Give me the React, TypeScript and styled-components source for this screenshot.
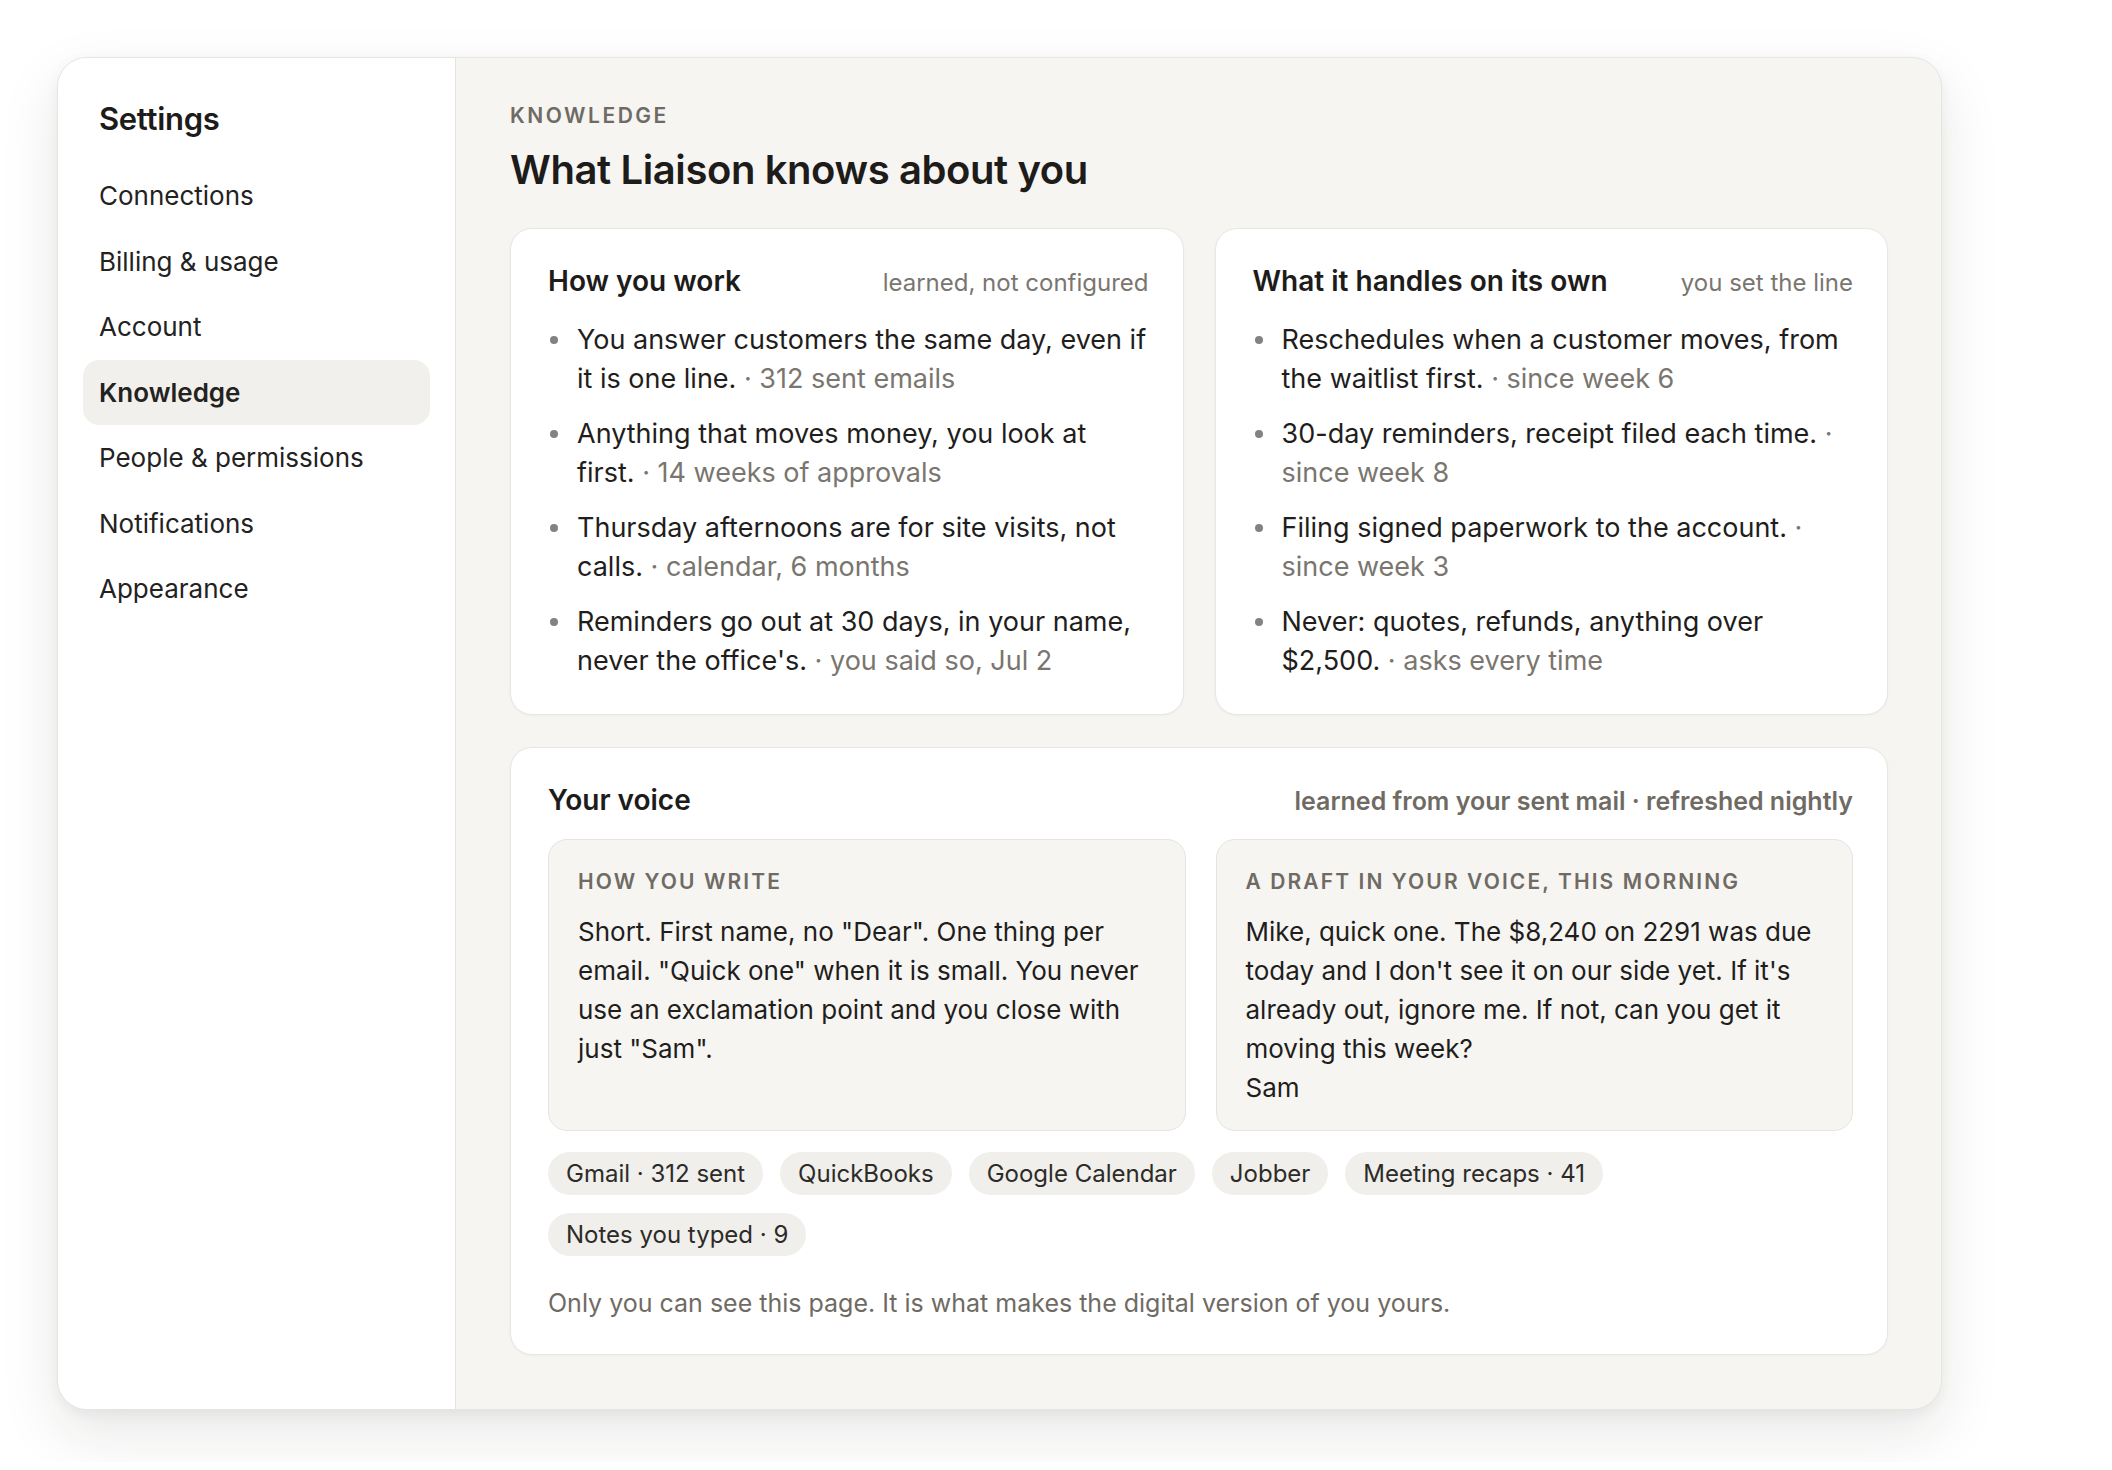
import { createGlobalStyle, styled } from "styled-components";

const GlobalStyle = createGlobalStyle`
  * { box-sizing: border-box; }
  body {
    margin: 0;
    background: #ffffff;
    font-family: Inter, "Noto Sans", sans-serif;
    color: #1f1e1c;
    -webkit-font-smoothing: antialiased;
  }
`;

const navItems = [
  "Connections",
  "Billing & usage",
  "Account",
  "Knowledge",
  "People & permissions",
  "Notifications",
  "Appearance",
];

type Fact = { text: string; source: string };

const howYouWork: Fact[] = [
  { text: "You answer customers the same day, even if it is one line.", source: "312 sent emails" },
  { text: "Anything that moves money, you look at first.", source: "14 weeks of approvals" },
  { text: "Thursday afternoons are for site visits, not calls.", source: "calendar, 6 months" },
  { text: "Reminders go out at 30 days, in your name, never the office's.", source: "you said so, Jul 2" },
];

const onItsOwn: Fact[] = [
  { text: "Reschedules when a customer moves, from the waitlist first.", source: "since week 6" },
  { text: "30-day reminders, receipt filed each time.", source: "since week 8" },
  { text: "Filing signed paperwork to the account.", source: "since week 3" },
  { text: "Never: quotes, refunds, anything over $2,500.", source: "asks every time" },
];

const sources = [
  "Gmail · 312 sent",
  "QuickBooks",
  "Google Calendar",
  "Jobber",
  "Meeting recaps · 41",
  "Notes you typed · 9",
];

const FactCard = ({ title, meta, facts }: { title: string; meta: string; facts: Fact[] }) => (
  <Card>
    <CardHeader>
      <CardTitle>{title}</CardTitle>
      <CardMeta>{meta}</CardMeta>
    </CardHeader>
    <FactList>
      {facts.map((fact) => (
        <FactItem key={fact.text}>
          {fact.text} <Source>· {fact.source}</Source>
        </FactItem>
      ))}
    </FactList>
  </Card>
);

const App = () => {
  return (
    <>
      <GlobalStyle />
      <Page>
        <Frame>
          <Sidebar>
            <SidebarTitle>Settings</SidebarTitle>
            <Nav>
              {navItems.map((item) => (
                <NavItem key={item} $active={item === "Knowledge"}>
                  {item}
                </NavItem>
              ))}
            </Nav>
          </Sidebar>
          <Main>
            <Eyebrow>Knowledge</Eyebrow>
            <PageTitle>What Liaison knows about you</PageTitle>
            <CardGrid>
              <FactCard title="How you work" meta="learned, not configured" facts={howYouWork} />
              <FactCard title="What it handles on its own" meta="you set the line" facts={onItsOwn} />
            </CardGrid>
            <Card>
              <CardHeader>
                <CardTitle>Your voice</CardTitle>
                <CardMeta $strong>learned from your sent mail · refreshed nightly</CardMeta>
              </CardHeader>
              <VoiceGrid>
                <VoiceBox>
                  <BoxLabel>How you write</BoxLabel>
                  <BoxText>
                    Short. First name, no "Dear". One thing per email. "Quick one" when it is small. You
                    never use an exclamation point and you close with just "Sam".
                  </BoxText>
                </VoiceBox>
                <VoiceBox>
                  <BoxLabel>A draft in your voice, this morning</BoxLabel>
                  <BoxText>
                    {`Mike, quick one. The $8,240 on 2291 was due today and I don't see it on our side yet. If it's already out, ignore me. If not, can you get it moving this week?\nSam`}
                  </BoxText>
                </VoiceBox>
              </VoiceGrid>
              <Chips>
                {sources.map((s) => (
                  <Chip key={s}>{s}</Chip>
                ))}
              </Chips>
              <Footnote>
                Only you can see this page. It is what makes the digital version of you yours.
              </Footnote>
            </Card>
          </Main>
        </Frame>
      </Page>
    </>
  );
};

export default App;

const Page = styled.div`
  padding: 57px 0 52px 57px;
`;

const Frame = styled.div`
  width: 1885px;
  display: grid;
  grid-template-columns: 398px 1fr;
  border-radius: 30px;
  border: 1px solid #e7e5e1;
  overflow: hidden;
  background: #f6f5f2;
  box-shadow: 0 24px 60px rgba(30, 25, 15, 0.1), 0 4px 14px rgba(30, 25, 15, 0.05);
`;

const Sidebar = styled.aside`
  background: #ffffff;
  border-right: 1.5px solid #e6e4df;
  padding: 40px 25px;
`;

const SidebarTitle = styled.h2`
  margin: 0 0 23px 16px;
  font-size: 31px;
  line-height: 42px;
  font-weight: 600;
  letter-spacing: -0.01em;
  color: #1d1c1a;
`;

const Nav = styled.nav`
  display: flex;
  flex-direction: column;
`;

const NavItem = styled.div<{ $active?: boolean }>`
  height: 65.5px;
  display: flex;
  align-items: center;
  padding: 0 16px;
  border-radius: 16px;
  font-size: 26px;
  font-weight: ${({ $active }) => ($active ? 600 : 400)};
  color: #23221f;
  background: ${({ $active }) => ($active ? "#f1f0ec" : "transparent")};
`;

const Main = styled.main`
  padding: 44px 53px 54px 54px;
  display: flex;
  flex-direction: column;
`;

const Eyebrow = styled.div`
  font-size: 21px;
  line-height: 28px;
  font-weight: 600;
  letter-spacing: 0.12em;
  text-transform: uppercase;
  color: #6f6b64;
`;

const PageTitle = styled.h1`
  margin: 14px 0 32px;
  font-size: 40px;
  line-height: 52px;
  font-weight: 600;
  letter-spacing: -0.01em;
  color: #1d1c1a;
`;

const CardGrid = styled.div`
  display: grid;
  grid-template-columns: 1fr 1fr;
  gap: 31px;
  margin-bottom: 32px;
`;

const Card = styled.section`
  background: #ffffff;
  border: 1.5px solid #e8e6e1;
  border-radius: 22px;
  padding: 33px 34px 34px 37px;
  box-shadow: 0 1px 3px rgba(30, 25, 15, 0.04);
`;

const CardHeader = styled.div`
  display: flex;
  justify-content: space-between;
  align-items: baseline;
  margin-bottom: 20px;
`;

const CardTitle = styled.h3`
  margin: 0;
  font-size: 28px;
  line-height: 38px;
  font-weight: 600;
  color: #1d1c1a;
`;

const CardMeta = styled.span<{ $strong?: boolean }>`
  font-size: ${({ $strong }) => ($strong ? "25px" : "24px")};
  font-weight: ${({ $strong }) => ($strong ? 600 : 400)};
  color: ${({ $strong }) => ($strong ? "#6f6b64" : "#7a766f")};
`;

const FactList = styled.ul`
  list-style: none;
  margin: 0;
  padding: 0;
  display: flex;
  flex-direction: column;
  gap: 16px;
`;

const FactItem = styled.li`
  position: relative;
  padding-left: 29px;
  font-size: 27px;
  line-height: 39px;
  color: #1f1e1c;

  &::before {
    content: "";
    position: absolute;
    left: 2px;
    top: 16px;
    width: 8px;
    height: 8px;
    border-radius: 50%;
    background: #848180;
  }
`;

const Source = styled.span`
  color: #7a766f;
`;

const VoiceGrid = styled.div`
  display: grid;
  grid-template-columns: 1fr 1fr;
  gap: 30px;
  margin-top: 20px;
`;

const VoiceBox = styled.div`
  background: #f6f5f2;
  border: 1.5px solid #e6e4df;
  border-radius: 19px;
  padding: 27px 22px 23px 29px;
`;

const BoxLabel = styled.div`
  font-size: 21px;
  line-height: 30px;
  font-weight: 600;
  letter-spacing: 0.1em;
  text-transform: uppercase;
  color: #6f6b64;
  margin-bottom: 15px;
`;

const BoxText = styled.p`
  margin: 0;
  font-size: 26px;
  line-height: 39px;
  color: #1f1e1c;
  white-space: pre-line;
`;

const Chips = styled.div`
  display: flex;
  flex-wrap: wrap;
  gap: 18px 17px;
  margin-top: 21px;
`;

const Chip = styled.span`
  height: 43px;
  display: inline-flex;
  align-items: center;
  padding: 0 18px;
  border-radius: 999px;
  background: #f0efeb;
  font-size: 24px;
  color: #2c2b28;
`;

const Footnote = styled.p`
  margin: 30px 0 0;
  font-size: 25px;
  line-height: 34px;
  color: #6f6b64;
`;
